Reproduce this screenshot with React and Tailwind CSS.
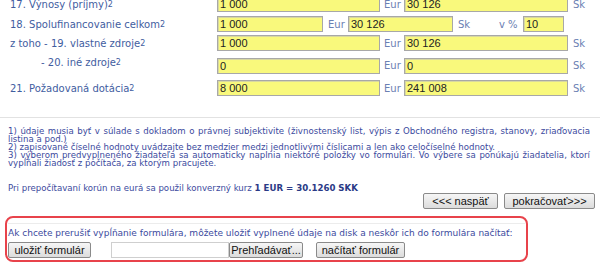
export default function App() {
  const lbl = "text-[#3f5d9f]";
  const unit = "text-[#6b80b3]";
  const inp =
    "h-[16px] bg-[#f9f97c] border border-[#a8a8a8] shadow-[inset_1px_1px_0_#d8d8a0] px-[2px] text-[11px] leading-[14px] text-[#222] font-['Liberation_Sans',sans-serif] flex items-center";
  const btn =
    "h-[16px] border border-[#8a8a8a] rounded-[2px] bg-gradient-to-b from-[#f6f6f6] to-[#dcdcdc] text-[11px] leading-[14px] whitespace-nowrap text-[#111] font-['Liberation_Sans',sans-serif] flex items-center justify-center";
  const sup = <sup className="text-[8px] relative -top-[1px]">2</sup>;
  return (
    <div className="w-[600px] h-[266px] overflow-hidden bg-white font-['DejaVu_Sans',sans-serif] text-[10px]">
      <div className="-mt-[4px]">
        {/* row 17 */}
        <div className="flex items-center h-[16px]">
          <div className={`w-[217px] pl-[10px] ${lbl}`}>17. Výnosy (príjmy){sup}</div>
          <div className={`${inp} w-[163px]`}>1 000</div>
          <div className={`w-[24px] pl-[4px] ${unit}`}>Eur</div>
          <div className={`${inp} w-[164px]`}>30 126</div>
          <div className={`pl-[5px] ${unit}`}>Sk</div>
        </div>
        {/* row 18 */}
        <div className="flex items-center h-[16px] mt-[4px]">
          <div className={`w-[217px] pl-[10px] ${lbl}`}>18. Spolufinancovanie celkom{sup}</div>
          <div className={`${inp} w-[106px]`}>1 000</div>
          <div className={`w-[25px] pl-[5px] ${unit}`}>Eur</div>
          <div className={`${inp} w-[105px]`}>30 126</div>
          <div className={`w-[46px] pl-[5px] ${unit}`}>Sk</div>
          <div className={`w-[24px] ${unit}`}>v %</div>
          <div className={`${inp} w-[41px]`}>10</div>
        </div>
        {/* row 19 */}
        <div className="flex items-center h-[16px] mt-[3px]">
          <div className={`w-[217px] pl-[10px] ${lbl}`}>z toho - 19. vlastné zdroje{sup}</div>
          <div className={`${inp} w-[163px]`}>1 000</div>
          <div className={`w-[24px] pl-[4px] ${unit}`}>Eur</div>
          <div className={`${inp} w-[164px]`}>30 126</div>
          <div className={`pl-[5px] ${unit}`}>Sk</div>
        </div>
        {/* row 20 */}
        <div className="flex items-start h-[16px] mt-[7px]">
          <div className={`w-[217px] pl-[41px] -mt-[3px] ${lbl}`}>- 20. iné zdroje{sup}</div>
          <div className={`${inp} w-[163px]`}>0</div>
          <div className={`w-[24px] pl-[4px] ${unit} leading-[16px]`}>Eur</div>
          <div className={`${inp} w-[164px]`}>0</div>
          <div className={`pl-[5px] ${unit} leading-[16px]`}>Sk</div>
        </div>
        {/* row 21 */}
        <div className="flex items-center h-[16px] mt-[6px]">
          <div className={`w-[217px] pl-[10px] ${lbl}`}>21. Požadovaná dotácia{sup}</div>
          <div className={`${inp} w-[163px]`}>8 000</div>
          <div className={`w-[24px] pl-[4px] ${unit}`}>Eur</div>
          <div className={`${inp} w-[164px]`}>241 008</div>
          <div className={`pl-[5px] ${unit}`}>Sk</div>
        </div>
      </div>

      <div className="mt-[21px] h-[1px] bg-[#e2e2e2]" />

      <div className="mt-[9px] pl-[8px] pr-[10px] text-[8.6px] leading-[8px] text-[#3b4a9e]">
        <div className="text-justify">
          1) údaje musia byť v súlade s dokladom o právnej subjektivite (živnostenský list, výpis z Obchodného registra, stanovy, zriaďovacia listina a pod.)
        </div>
        <div className="text-justify">2) zapisované číselné hodnoty uvádzajte bez medzier medzi jednotlivými číslicami a len ako celočíselné hodnoty.</div>
        <div className="text-justify">
          3) výberom predvyplneného žiadateľa sa automaticky naplnia niektoré položky vo formulári. Vo výbere sa ponúkajú žiadatelia, ktorí vypĺňali žiadosť z počítača, za ktorým pracujete.
        </div>
        <div className="mt-[17px]">
          Pri prepočítavaní korún na eurá sa použil konverzný kurz <b className="text-[#2a3a86]">1 EUR = 30.1260 SKK</b>
        </div>
      </div>

      <div className="flex justify-end gap-[6px] pr-[5px] mt-[1px]">
        <div className={`${btn} w-[75px]`}>&lt;&lt;&lt; naspäť</div>
        <div className={`${btn} w-[91px]`}>pokračovať&gt;&gt;&gt;</div>
      </div>

      <div className="mt-[7px] ml-[5px] w-[523px] h-[46px] border-2 border-[#e8434b] rounded-[8px] px-[1px]">
        <div className="mt-[5px] h-[1px] bg-[#ececec]" />
        <div className="mt-[5px] text-[9px] leading-[9px] whitespace-nowrap text-[#3b4a9e]">
          Ak chcete prerušiť vypĺňanie formulára, môžete uložiť vyplnené údaje na disk a neskôr ich do formulára načítať:
        </div>
        <div className="flex items-center mt-[4px]">
          <div className={`${btn} w-[83px]`}>uložiť formulár</div>
          <div className="ml-[20px] w-[118px] h-[16px] border border-[#cfcfcf] bg-white" />
          <div className={`${btn} w-[74px]`}>Prehľadávať...</div>
          <div className={`${btn} w-[89px] ml-[13px]`}>načítať formulár</div>
        </div>
      </div>
    </div>
  );
}
